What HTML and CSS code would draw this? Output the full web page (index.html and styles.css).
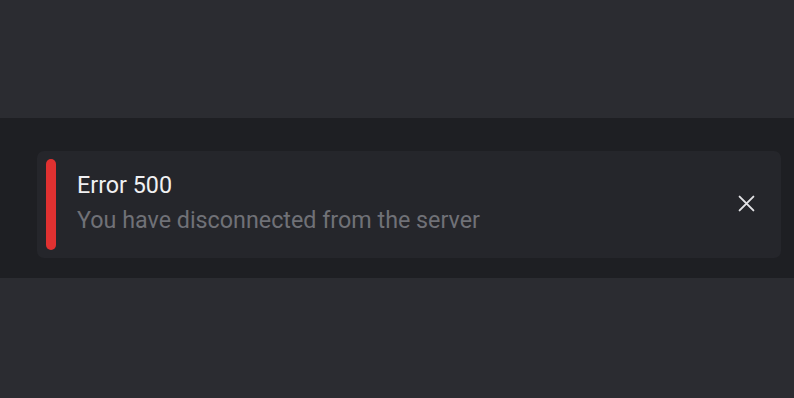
FILE: index.html
```html
<!DOCTYPE html>
<html>
<head>
<meta charset="utf-8">
<link rel="stylesheet" href="styles.css">
</head>
<body>
<div class="page">
  <div class="band">
    <div class="toast">
      <div class="accent"></div>
      <div class="text">
        <div class="title">Error 500</div>
        <div class="message">You have disconnected from the server</div>
      </div>
      <button class="close" aria-label="Close">
        <svg width="17" height="17" viewBox="0 0 16 16"><path d="M1.5 1.5L14.5 14.5M14.5 1.5L1.5 14.5" stroke="#e2e2e5" stroke-width="1.8" stroke-linecap="round"/></svg>
      </button>
    </div>
  </div>
</div>
</body>
</html>
```
FILE: styles.css
```css
html, body {
  margin: 0;
  padding: 0;
  background: #2b2c31;
  font-family: Roboto, "Liberation Sans", sans-serif;
}
.page {
  width: 794px;
  height: 398px;
  padding-top: 118px;
  box-sizing: border-box;
}
.band {
  background: #1e1f23;
  height: 160px;
  padding: 33px 13px 0 37px;
  box-sizing: border-box;
}
.toast {
  display: flex;
  align-items: center;
  height: 107px;
  background: #25262b;
  border-radius: 7px;
  padding: 8px 26px 8px 9px;
  box-sizing: border-box;
}
.accent {
  width: 10px;
  align-self: stretch;
  background: #e03131;
  border-radius: 5px;
}
.text {
  flex: 1;
  margin-left: 21px;
  padding-bottom: 4px;
}
.title {
  color: #f0f0f2;
  font-size: 23.3px;
  line-height: 35px;
}
.message {
  color: #707177;
  font-size: 23.3px;
  line-height: 35px;
}
.close {
  background: none;
  border: 0;
  padding: 0;
  width: 18px;
  height: 18px;
  margin-bottom: 3px;
  display: flex;
  align-items: center;
  justify-content: center;
}
```
